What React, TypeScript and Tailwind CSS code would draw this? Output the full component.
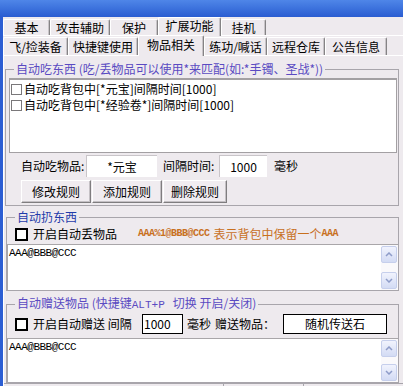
import React from "react";

const topTabs = [
  { label: "基本", w: "w-[47px]" },
  { label: "攻击辅助", w: "w-[60px]" },
  { label: "保护", w: "w-[48px]" },
  { label: "扩展功能", w: "w-[63px]", active: true },
  { label: "挂机", w: "w-[45px]" },
];

const subTabs = [
  { label: "飞/捡装备", w: "w-[65px]" },
  { label: "快捷键使用", w: "w-[70px]" },
  { label: "物品相关", w: "w-[66px]", active: true },
  { label: "练功/喊话", w: "w-[63px]" },
  { label: "远程仓库", w: "w-[58px]" },
  { label: "公告信息", w: "w-[62px]" },
];

function Tab({ label, w, active, h, hActive }: { label: string; w: string; active?: boolean; h: string; hActive: string }) {
  return (
    <div
      className={`${w} flex items-center justify-center border-t border-l border-white border-r border-r-[#858385] rounded-t-[2px] shadow-[inset_-1px_0_0_#C8C4C8] ${
        active ? `${hActive} relative z-10 -mb-px bg-[#EEEAEE] pb-[2px]` : h
      }`}
    >
      {label}
    </div>
  );
}

function ScrollBtn({ down }: { down?: boolean }) {
  return (
    <div className="h-[17px] w-[16px] rounded-[2px] border border-[#C6CFEC] bg-linear-to-b from-[#F1F3FD] to-[#D3DBF4] flex items-center justify-center">
      <svg width="8" height="5" viewBox="0 0 8 5">
        <polyline points={down ? "1,1 4,4 7,1" : "1,4 4,1 7,4"} fill="none" stroke="#8E9CC9" strokeWidth="1.5" />
      </svg>
    </div>
  );
}

function Memo({ h }: { h: string }) {
  return (
    <div className={`${h} flex bg-white border-t border-l border-[#A9A6A9]`}>
      <div className="flex-1 pl-[1px] pt-[2px] font-['Liberation_Mono',monospace] text-[11px] leading-[12px] tracking-[-0.5px] text-black">
        AAA@BBB@CCC
      </div>
      <div className="w-[17px] flex flex-col justify-between bg-[#FAF9FB] py-[1px]">
        <ScrollBtn />
        <ScrollBtn down />
      </div>
    </div>
  );
}

function BigCheck() {
  return <span className="w-[13px] h-[13px] border-2 border-black bg-white shrink-0" />;
}

function Button({ label, w }: { label: string; w: string }) {
  return (
    <div className={`${w} h-[23px] flex items-center justify-center bg-[#F0ECF0] border border-t-white border-l-white border-r-[#7F7D7F] border-b-[#7F7D7F] shadow-[inset_-1px_-1px_0_#C4C0C4]`}>
      {label}
    </div>
  );
}

export default function App() {
  return (
    <div className="w-[403px] h-[386px] overflow-hidden bg-[#EEEAEE] text-black text-[12px] leading-[14px] font-['Noto_Sans_CJK_SC',sans-serif] flex flex-col">
      {/* title bar */}
      <div className="h-[17px] shrink-0 bg-linear-to-b from-[#4F86E8] to-[#2A5CD1]" />

      <div className="flex-1 flex flex-col border-l-[3px] border-[#2C5ED3]">
        {/* outer tabs */}
        <div className="h-[18px] flex items-end">
          {topTabs.map((t) => (
            <Tab key={t.label} {...t} h="h-[16px]" hActive="h-[19px]" />
          ))}
        </div>

        <div className="flex-1 flex flex-col border-t border-white">
          {/* inner tabs */}
          <div className="h-[19px] flex items-end">
            {subTabs.map((t) => (
              <Tab key={t.label} {...t} h="h-[18px]" hActive="h-[21px]" />
            ))}
          </div>

          <div className="flex-1 flex flex-col border-t border-l border-white">
            {/* 自动吃东西 */}
            <fieldset className="mt-[6px] ml-[1px] mr-[4px] border border-[#A8A5AB] pb-[2px]">
              <legend className="ml-[8px] px-[2px] text-[#5A4AC2]">自动吃东西 (吃/丢物品可以使用*来匹配(如:*手镯、圣战*))</legend>
              <div className="mt-[2px] ml-[3px] mr-[1px] h-[75px] bg-white border border-[#A3A0A3] border-t-2 pt-[1px] pl-[1px]">
                {["自动吃背包中[*元宝]间隔时间[1000]", "自动吃背包中[*经验卷*]间隔时间[1000]"].map((s) => (
                  <div key={s} className="h-[16px] flex items-center gap-[2px]">
                    <span className="w-[11px] h-[11px] border border-[#7A787A] bg-white shrink-0" />
                    <span>{s}</span>
                  </div>
                ))}
              </div>
              <div className="mt-[2px] h-[22px] flex items-center pl-[15px]">
                <span className="w-[65px]">自动吃物品:</span>
                <div className="w-[71px] h-[22px] bg-white border-t border-l border-[#C9C5C9] flex items-center justify-center">*元宝</div>
                <span className="ml-[6px] w-[56px]">间隔时间:</span>
                <div className="w-[48px] h-[22px] bg-white border-t border-l border-[#C9C5C9] flex items-center justify-center">1000</div>
                <span className="ml-[7px]">毫秒</span>
              </div>
              <div className="mt-[3px] flex gap-[1px] pl-[15px]">
                <Button label="修改规则" w="w-[70px]" />
                <Button label="添加规则" w="w-[70px]" />
                <Button label="删除规则" w="w-[64px]" />
              </div>
            </fieldset>

            {/* 自动扔东西 */}
            <fieldset className="mt-[4px] ml-[2px] mr-[4px] border border-[#A8A5AB]">
              <legend className="ml-[8px] px-[2px] text-[#1F3BAA]">自动扔东西</legend>
              <div className="mt-[2px] h-[16px] flex items-center pl-[8px]">
                <BigCheck />
                <span className="ml-[5px]">开启自动丢物品</span>
                <span className="ml-[21px] text-[#C8701E] flex items-center">
                  <span className="font-['Liberation_Mono',monospace] text-[10px] tracking-[-0.5px] font-bold">AAA%1@BBB@CCC</span>
                  <span className="ml-[4px]">表示背包中保留一个</span>
                  <span className="font-['Liberation_Mono',monospace] text-[10px] tracking-[-0.5px] font-bold">AAA</span>
                </span>
              </div>
              <div className="mt-[2px]">
                <Memo h="h-[46px]" />
              </div>
            </fieldset>

            {/* 自动赠送物品 */}
            <fieldset className="mt-[5px] ml-[2px] mr-[4px] border border-[#A8A5AB]">
              <legend className="ml-[8px] px-[2px] text-[#5A4AC2] whitespace-pre">
                自动赠送物品 (快捷键<span className="font-['Liberation_Mono',monospace] text-[11px]">ALT+P</span>   切换 开启/关闭)
              </legend>
              <div className="mt-[2px] h-[20px] flex items-center pl-[8px]">
                <BigCheck />
                <span className="ml-[5px] w-[109px]">开启自动赠送 间隔</span>
                <div className="w-[41px] h-[20px] bg-white border border-black flex items-center pl-[1px]">1000</div>
                <span className="ml-[4px]">毫秒</span>
                <span className="ml-[4px] w-[68px]">赠送物品：</span>
                <div className="w-[104px] h-[20px] bg-white border border-black flex items-center justify-center">随机传送石</div>
              </div>
              <div className="mt-[4px]">
                <Memo h="h-[44px]" />
              </div>
            </fieldset>

            {/* status strip */}
            <div className="h-[6px] flex border-t border-[#A8A5AB]">
              <div className="w-[220px] border-r border-[#A8A5AB]" />
              <div className="w-[80px] border-r border-[#A8A5AB]" />
              <div className="flex-1" />
            </div>
          </div>
        </div>
      </div>
    </div>
  );
}
